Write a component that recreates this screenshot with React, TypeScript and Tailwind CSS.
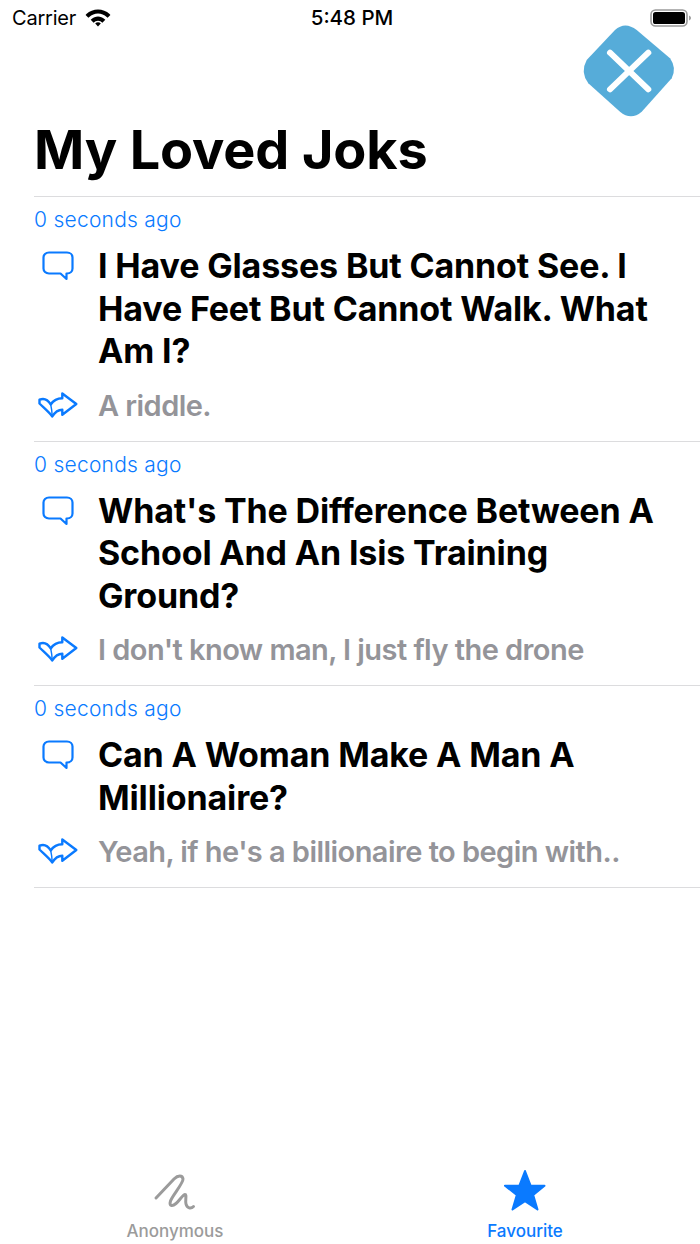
import React from "react";

type Joke = {
  id: number;
  title: string[];
  answer: string;
};

const jokes: Joke[] = [
  {
    id: 1,
    title: ["I Have Glasses But Cannot See. I", "Have Feet But Cannot Walk. What", "Am I?"],
    answer: "A riddle.",
  },
  {
    id: 2,
    title: ["What's The Difference Between A", "School And An Isis Training", "Ground?"],
    answer: "I don't know man, I just fly the drone",
  },
  {
    id: 3,
    title: ["Can A Woman Make A Man A", "Millionaire?"],
    answer: "Yeah, if he's a billionaire to begin with..",
  },
];

function WifiIcon() {
  return (
    <svg width="26" height="20" viewBox="0 1.5 26 20" fill="#000">
      <path d="M13 3C8.6 3 4.6 4.7 1.4 7.5L0.6 8.4L3.4 11.3L4.3 10.4C6.7 8.3 9.7 7 13 7C16.3 7 19.3 8.3 21.7 10.4L22.6 11.3L25.4 8.4L24.6 7.5C21.4 4.7 17.4 3 13 3Z" />
      <path d="M13 10C10.6 10 8.3 11 6.6 12.4L5.7 13.3L8.6 16.2C9.8 14.9 11.3 14.2 13 14.2C14.7 14.2 16.2 14.9 17.4 16.2L20.3 13.3L19.4 12.4C17.7 11 15.4 10 13 10Z" />
      <path d="M13 15.8C11.9 15.8 11 16.2 10.2 17L13 20L15.8 17C15 16.2 14.1 15.8 13 15.8Z" />
    </svg>
  );
}

function BatteryIcon() {
  return (
    <svg width="42" height="20" viewBox="0 0 42 20">
      <rect x="1" y="2" width="36" height="16" rx="4.5" fill="none" stroke="#9a9a9a" strokeWidth="1.6" />
      <rect x="3" y="4" width="32" height="12" rx="2.6" fill="#000" />
      <path d="M39 7.5C40.2 8 41 8.9 41 10C41 11.1 40.2 12 39 12.5Z" fill="#a0a0a0" />
    </svg>
  );
}

function CloseBadge() {
  return (
    <svg width="100" height="100" viewBox="0 0 100 100" className="absolute left-[580px] top-[21px]">
      <path
        d="M56.7 9 L90 37.3 Q97 47 91.7 57.3 L61.7 90.7 Q51 100 40 90.7 L8.3 62.3 Q0 51 6.7 39 L35 9 Q45 0 56.7 9 Z"
        fill="#56acd9"
      />
      <path d="M30 31.7 L68.3 68.3 M68.3 31.7 L30 68.3" stroke="#fff" strokeWidth="6" strokeLinecap="round" fill="none" />
    </svg>
  );
}

function BubbleIcon() {
  return (
    <svg width="32" height="30" viewBox="0 0 32 30" fill="none" stroke="#0a7aff" strokeWidth="2.2" strokeLinejoin="round">
      <path d="M7 1.5H25C28.3 1.5 30.5 3.7 30.5 6.5V17.5C30.5 20.3 28.3 22.5 25 22.5H24.5V28L18.5 22.5H7C3.7 22.5 1.5 20.3 1.5 17.5V6.5C1.5 3.7 3.7 1.5 7 1.5Z" />
    </svg>
  );
}

function ReplyIcon() {
  return (
    <svg width="48" height="36" viewBox="0 0 48 36" fill="none" stroke="#0a7aff" strokeWidth="2.4" strokeLinejoin="round">
      <path d="M28.3 5.5L42.3 16L28.3 26.7V21.7C24 21.7 21 24 18.3 28.5C15 24 10 20 5.5 15.5V11.7C9 10.3 13.5 11 16.7 16.5C19 13 23 10.3 28.3 10.3Z" />
      <path d="M16.7 16.5C17.5 20 18 24 18.3 28.5" strokeWidth="1.4" />
    </svg>
  );
}

function ScribbleIcon() {
  return (
    <svg width="50" height="44" viewBox="0 0 50 44" fill="none" stroke="#9b9b9b" strokeWidth="3" strokeLinecap="round" strokeLinejoin="round">
      <path d="M6 28L24 9C28 5 32.5 5 33 9C33.5 13 22 26 20.5 31C19 36 22 37 26 33.5C29 31 33 24.5 35 24.5C37 24.5 35 30 36 34C37 38.5 41 39 43.5 36.5" />
    </svg>
  );
}

function StarIcon() {
  return (
    <svg width="54" height="50" viewBox="0 0 54 50" fill="#0a7aff" stroke="#0a7aff" strokeWidth="2" strokeLinejoin="round">
      <path d="M27 6L32.6 20.7H46.5L35.2 30L39.5 44.5L27 36.2L14.5 44.5L18.8 30L7 20.7H21.4Z" />
    </svg>
  );
}

function JokeRow({ joke }: { joke: Joke }) {
  return (
    <div className="border-b border-[#dcdcde] pb-[20px]">
      <p className="text-[21px] leading-[25px] pt-[10px] box-content font-light tracking-[0.25px] text-[#0a7aff]">0 seconds ago</p>
      <div className="flex mt-[13px]">
        <div className="w-[65px] shrink-0 pl-[8px] pt-[6px]">
          <BubbleIcon />
        </div>
        <h2 className="text-[34px] leading-[42.5px] font-bold tracking-[-0.15px] -ml-px text-black whitespace-nowrap">
          {joke.title.map((line) => (
            <div key={line}>{line}</div>
          ))}
        </h2>
      </div>
      <div className="flex items-center mt-[18px] h-[30px]">
        <div className="w-[65px] shrink-0 flex">
          <ReplyIcon />
        </div>
        <p className="text-[29px] font-semibold tracking-[-0.55px] -ml-px text-[#949499] whitespace-nowrap">{joke.answer}</p>
      </div>
    </div>
  );
}

export default function App() {
  return (
    <div className="relative flex flex-col w-[700px] h-[1244px] bg-white overflow-hidden font-['Inter',sans-serif]">
      <div className="flex items-center h-[36px] px-[8px]">
        <div className="flex-1 flex items-center gap-[9px] pl-[4px]">
          <span className="text-[20px] tracking-[-0.2px] text-black">Carrier</span>
          <WifiIcon />
        </div>
        <span className="text-[20.5px] font-medium text-black">5:48 PM</span>
        <div className="flex-1 flex justify-end">
          <BatteryIcon />
        </div>
      </div>

      <CloseBadge />

      <div className="pl-[34px] flex-1 flex flex-col">
        <h1 className="text-[54px] leading-[60px] mt-[84px] font-bold tracking-[-0.15px] text-black">My Loved Joks</h1>
        <div className="border-b border-[#dcdcde] mt-[16px]" />
        {jokes.map((joke) => (
          <JokeRow key={joke.id} joke={joke} />
        ))}
      </div>

      <div className="flex h-[94px] pt-[15px]">
        <div className="flex-1 flex flex-col items-center">
          <div className="h-[50px] pt-[5px]">
            <ScribbleIcon />
          </div>
          <span className="text-[17px] leading-[21px] font-medium text-[#9b9b9b] mt-[6px]">Anonymous</span>
        </div>
        <div className="flex-1 flex flex-col items-center">
          <div className="h-[50px]">
            <StarIcon />
          </div>
          <span className="text-[17px] leading-[21px] font-medium text-[#0a7aff] mt-[6px]">Favourite</span>
        </div>
      </div>
    </div>
  );
}
